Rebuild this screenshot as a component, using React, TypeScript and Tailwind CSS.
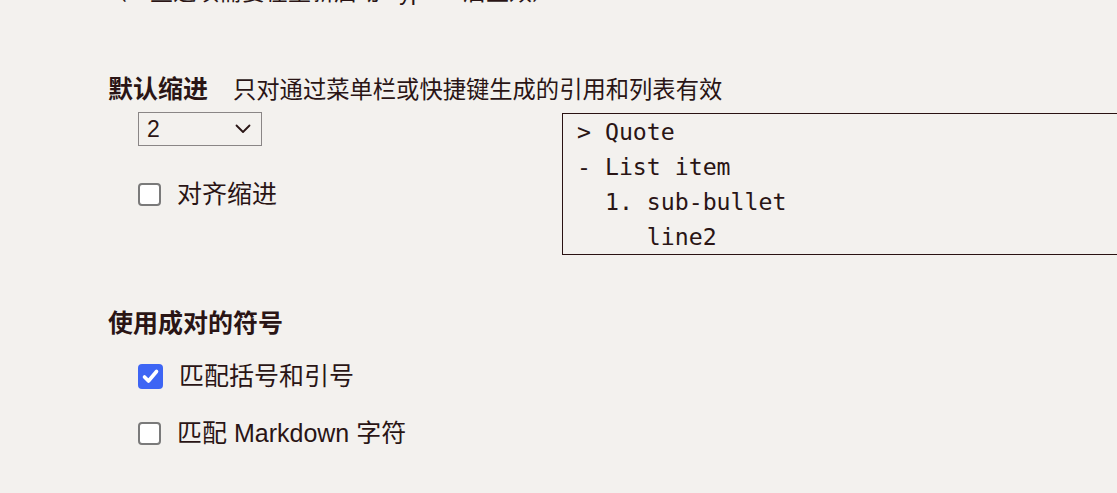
import React from "react";

const sans = { fontFamily: '"Liberation Sans", "Noto Sans CJK SC", sans-serif' };

function Box({ checked }: { checked?: boolean }) {
  if (checked) {
    return (
      <span className="flex h-[25px] w-[25px] shrink-0 items-center justify-center rounded-[4px] bg-[#3d65f4]">
        <svg width="25" height="25" viewBox="0 0 25 25">
          <path d="M6.5 13 L10.5 17 L18.5 7.5" fill="none" stroke="#ffffff" strokeWidth="3.6" strokeLinecap="round" strokeLinejoin="round" />
        </svg>
      </span>
    );
  }
  return <span className="block h-[23px] w-[23px] shrink-0 rounded-[4px] border-2 border-[#7a7a7a] bg-white" />;
}

function Row({ checked, label, className }: { checked?: boolean; label: string; className?: string }) {
  return (
    <div className={"flex h-[36px] items-center gap-[16px] " + (className || "")}>
      <Box checked={checked} />
      <span className="text-[25px] leading-[36px]">{label}</span>
    </div>
  );
}

export default function App() {
  return (
    <div
      className="h-[493px] w-[1117px] overflow-hidden bg-[#f3f1ee] text-[#2a1515]"
      style={sans}
    >
      <div className="mt-[-23px] pl-[104px] text-[23px] leading-[30px] whitespace-nowrap">
        （一些选项需要在重新启动 Typora 后生效）
      </div>

      <div className="mt-[64px] flex h-[36px] items-baseline pl-[108px] whitespace-nowrap">
        <span className="text-[25px] font-bold leading-[36px]">默认缩进</span>
        <span className="ml-[25px] text-[23.3px] leading-[36px]">只对通过菜单栏或快捷键生成的引用和列表有效</span>
      </div>

      <div className="mt-[5px] flex pl-[138px]">
        <div className="w-[424px] shrink-0">
          <div className="flex h-[34px] w-[124px] items-center justify-between border border-[#8a8686] pl-[8px] pr-[10px]">
            <span className="text-[23px] leading-none">2</span>
            <svg width="16" height="10" viewBox="0 0 16 10">
              <path d="M1.5 1.5 L8 8 L14.5 1.5" fill="none" stroke="#2a1515" strokeWidth="1.8" strokeLinecap="round" strokeLinejoin="round" />
            </svg>
          </div>
          <Row label="对齐缩进" className="mt-[30px]" />
        </div>
        <pre
          className="mt-[1px] w-[620px] shrink-0 border border-[#2a1212] pl-[14px] text-[23.2px] leading-[35px]"
          style={{ fontFamily: '"DejaVu Sans Mono", "Liberation Mono", monospace' }}
        >
{`> Quote
- List item
  1. sub-bullet
     line2`}
        </pre>
      </div>

      <div className="mt-[50px] pl-[108px] text-[25px] font-bold leading-[36px]">使用成对的符号</div>

      <div className="pl-[138px]">
        <Row checked label="匹配括号和引号" className="mt-[17px]" />
        <Row label="匹配 Markdown 字符" className="mt-[21px]" />
      </div>
    </div>
  );
}
